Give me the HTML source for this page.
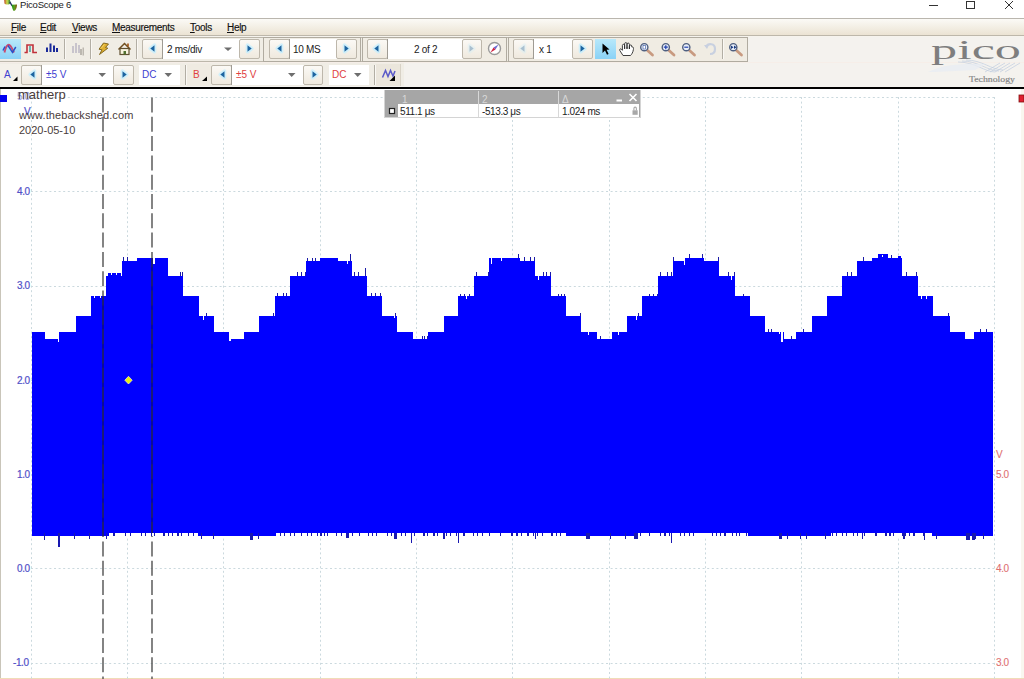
<!DOCTYPE html>
<html><head><meta charset="utf-8">
<style>
*{margin:0;padding:0;box-sizing:border-box}
html,body{width:1024px;height:679px;overflow:hidden;background:#fff;font-family:"Liberation Sans",sans-serif}
.a{position:absolute}
.t{position:absolute;white-space:nowrap;line-height:1}
#title{left:0;top:0;width:1024px;height:19px;background:#fff;border-bottom:1px solid #bab6ae}
#menu{left:0;top:19px;width:1024px;height:17px;background:linear-gradient(#fbfaf6,#ebe3d3);border-bottom:1px solid #bdb7aa}
#tb{left:0;top:36px;width:1024px;height:51px;background:#f4f2ee}
.m{font-size:10px;color:#111;-webkit-text-stroke:0.15px #111;top:23px;letter-spacing:-0.3px}
.m u{text-decoration:underline;text-underline-offset:1px}

.sep{position:absolute;width:2px;height:20px;background:linear-gradient(90deg,#b2aea4 50%,#faf8f4 50%)}
.btn{position:absolute;border:1px solid #bdb7ab;border-radius:2px;background:linear-gradient(#fbf9f5,#efe9de)}
.cmb{position:absolute;background:#fff;border-left:1px solid #9f9b93}
.frm{position:absolute;border:1px solid #b0aba0;background:#f0ece3}
.sel{background:linear-gradient(#b8e8fa,#8ad2f6)}
.tx{font-size:10px;color:#222;letter-spacing:-0.3px}
.tb{font-size:10px;color:#4040d0}
.tr{font-size:10px;color:#e04040}

.ax{font-size:10px;color:#5050c8;-webkit-text-stroke:0.2px #5050c8;letter-spacing:-0.4px}
.axr{font-size:10px;color:#e07070;-webkit-text-stroke:0.1px #e07070;letter-spacing:-0.4px}
.nt{font-size:11px;color:#4a3c3c}
.mh{font-size:10px;color:#d8d8d8}
.md{font-size:10px;color:#222;letter-spacing:-0.4px}
</style></head><body>
<div id="title" class="a"></div>
<div class="t" style="left:20px;top:0.3px;font-size:9.5px;color:#1a1a1a;letter-spacing:-0.2px">PicoScope 6</div>
<div id="menu" class="a"></div>
<div class="t m" style="left:11px"><u>F</u>ile</div>
<div class="t m" style="left:40px"><u>E</u>dit</div>
<div class="t m" style="left:72px"><u>V</u>iews</div>
<div class="t m" style="left:112px"><u>M</u>easurements</div>
<div class="t m" style="left:190px"><u>T</u>ools</div>
<div class="t m" style="left:227px"><u>H</u>elp</div>
<div id="tb" class="a"></div>

<!-- toolbar 1 -->
<div class="a" style="left:0;top:36px;width:1024px;height:1px;background:#f6f3ed"></div>
<div class="a" style="left:0;top:37px;width:748px;height:1px;background:#bcb7ab"></div>
<div class="a" style="left:0;top:61px;width:748px;height:1px;background:#bcb7ab"></div>
<div class="a" style="left:0;top:38px;width:748px;height:23px;background:#f0ede5"></div>
<div class="a sel" style="left:0;top:39px;width:21px;height:20px"></div>
<div class="sep" style="left:64px;top:39px"></div>
<div class="sep" style="left:90px;top:39px"></div>
<div class="sep" style="left:136px;top:39px"></div>
<!-- timebase -->
<div class="btn" style="left:142px;top:39px;width:21px;height:20px"></div>
<div class="cmb" style="left:162px;top:39px;width:78px;height:20px"></div>
<div class="btn" style="left:239px;top:39px;width:21px;height:20px"></div>
<!-- frames -->
<div class="frm" style="left:263px;top:37px;width:98px;height:25px"></div>
<div class="btn" style="left:269px;top:39px;width:21px;height:20px"></div>
<div class="cmb" style="left:289px;top:39px;width:48px;height:20px"></div>
<div class="btn" style="left:336px;top:39px;width:21px;height:20px"></div>
<div class="frm" style="left:362px;top:37px;width:145px;height:25px"></div>
<div class="btn" style="left:367px;top:39px;width:21px;height:20px"></div>
<div class="cmb" style="left:387px;top:39px;width:76px;height:20px"></div>
<div class="btn" style="left:462px;top:39px;width:20px;height:20px"></div>
<div class="frm" style="left:508px;top:37px;width:240px;height:25px"></div>
<div class="btn" style="left:513px;top:39px;width:21px;height:20px"></div>
<div class="cmb" style="left:533px;top:39px;width:40px;height:20px"></div>
<div class="btn" style="left:572px;top:39px;width:21px;height:20px"></div>
<div class="a sel" style="left:595px;top:39px;width:21px;height:20px"></div>
<div class="sep" style="left:722px;top:39px"></div>
<div class="t tx" style="left:167px;top:45px">2 ms/div</div>
<div class="t tx" style="left:293px;top:45px">10 MS</div>
<div class="t tx" style="left:414px;top:45px">2 of 2</div>
<div class="t tx" style="left:539px;top:45px">x 1</div>
<!-- toolbar 2 -->
<div class="a" style="left:0;top:62px;width:1024px;height:1px;background:#f6eee8"></div>
<div class="a" style="left:0;top:63px;width:404px;height:23px;background:#f0ede5"></div>
<div class="a" style="left:0;top:64px;width:21px;height:22px;background:#f4f1ea"></div>
<div class="btn" style="left:21px;top:65px;width:21px;height:20px"></div>
<div class="cmb" style="left:41px;top:65px;width:73px;height:20px"></div>
<div class="btn" style="left:113px;top:65px;width:21px;height:20px"></div>
<div class="cmb" style="left:139px;top:65px;width:41px;height:20px;border-left:none"></div>
<div class="sep" style="left:185px;top:65px"></div>
<div class="a" style="left:187px;top:64px;width:24px;height:22px;background:#efebe2"></div>
<div class="btn" style="left:211px;top:65px;width:21px;height:20px"></div>
<div class="cmb" style="left:231px;top:65px;width:73px;height:20px"></div>
<div class="btn" style="left:303px;top:65px;width:20px;height:20px"></div>
<div class="cmb" style="left:329px;top:65px;width:40px;height:20px;border-left:none"></div>
<div class="sep" style="left:374px;top:65px"></div>
<div class="a" style="left:376px;top:64px;width:25px;height:22px;background:#ebe6dc;border-right:1px solid #d8d2c6"></div>
<div class="t tb" style="left:4px;top:70px">A</div>
<div class="t tb" style="left:46px;top:70px">±5 V</div>
<div class="t tb" style="left:142px;top:70px">DC</div>
<div class="t tr" style="left:193px;top:70px">B</div>
<div class="t tr" style="left:236px;top:70px">±5 V</div>
<div class="t tr" style="left:332px;top:70px">DC</div>

<svg class="a" style="left:0;top:0" width="1024" height="89" viewBox="0 0 1024 89">
<defs>
<filter id="gl" x="-1" y="-1" width="3" height="3"><feGaussianBlur stdDeviation="1"/></filter>
</defs>
<!-- app icon -->
<defs>
<linearGradient id="ig1" x1="0" x2="1"><stop offset="0" stop-color="#c04020"/><stop offset="0.45" stop-color="#c8e050"/><stop offset="1" stop-color="#207030"/></linearGradient>
<linearGradient id="ig2" x1="0" x2="1"><stop offset="0" stop-color="#109010"/><stop offset="0.5" stop-color="#60a020"/><stop offset="1" stop-color="#805010"/></linearGradient>
</defs>
<path d="M4.2 0H10L10.6 3.2C9.5 5, 5.5 5, 4.5 3.5Z" fill="url(#ig1)"/>
<path d="M9.8 1.8L12.2 6" stroke="#283468" stroke-width="1.4"/>
<path d="M11.6 4.8L17 4.5C17 8, 15.5 11, 13.8 11C12.6 10, 12.1 7.5, 11.6 4.8Z" fill="url(#ig2)"/>
<!-- window controls -->
<path d="M929 5.5H938" stroke="#333" stroke-width="1"/>
<rect x="966.5" y="1.5" width="8" height="7" fill="none" stroke="#333" stroke-width="1"/>
<path d="M1005 1L1013 9M1013 1L1005 9" stroke="#333" stroke-width="1"/>
<!-- scope icon -->
<path d="M4.5 52.5 C6 46, 7.5 44.8, 8.8 44.8 C10.2 44.8, 12 48, 14 52.5" fill="none" stroke="#c84a70" stroke-width="1.9"/>
<path d="M3 50.5 L5 46.5 M8 45.5 L12.5 52.3 L15.8 47" fill="none" stroke="#2a50c8" stroke-width="1.5"/>
<!-- square wave -->
<path d="M24.5 52.5H27V45H33V52.5H37" fill="none" stroke="#c0303a" stroke-width="1.6"/>
<path d="M30 46V52" stroke="#40a0a0" stroke-width="1.5"/>
<!-- bars -->
<g fill="#1a2a9a"><rect x="46" y="47.5" width="2" height="4.5"/><rect x="49.5" y="43.5" width="2" height="8.5"/><rect x="53" y="45.5" width="2" height="6.5"/><rect x="56" y="48" width="2" height="4"/></g>
<!-- disabled bars -->
<g fill="#c8c4cc"><rect x="72" y="46" width="2" height="7"/><rect x="75" y="43" width="2" height="10"/><rect x="78" y="45" width="2" height="8"/></g>
<g fill="#bcb8b0"><rect x="80" y="49" width="2" height="6"/><rect x="82.5" y="47.5" width="1.5" height="8"/></g>
<!-- lightning -->
<path d="M103.5 43 L108.5 44 L105.5 47.5 L107.8 48.2 L99.5 54.5 L102 49.8 L99 49.2 Z" fill="#e0b030" stroke="#7a6018" stroke-width="0.9" stroke-linejoin="round"/>
<path d="M104.5 44.5 L101 48.5" stroke="#f8e080" stroke-width="0.8"/>
<!-- house -->
<path d="M118.5 49.5 L124.5 43.5 L130.5 49.5" fill="none" stroke="#705020" stroke-width="1.5"/>
<rect x="120" y="48.5" width="9" height="6" fill="#f8f4e0" stroke="#605030" stroke-width="1.2"/>
<rect x="123.5" y="51" width="2.5" height="3.5" fill="#507030"/>
<path d="M128 43.5V46.5" stroke="#a05010" stroke-width="1.6"/>
<!-- nav arrows (glow + triangle) -->
<g id="la">
<path d="M154.5 45.2 V51.8 L150.3 48.5 Z" fill="#c8f0ff" stroke="#c4eeff" stroke-width="3.6" stroke-linejoin="round" opacity="0.75"/>
<path d="M154.5 45.2 V51.8 L150.3 48.5 Z" fill="#1c64a0"/>
</g>
<use href="#la" x="127" y="0"/>
<use href="#la" x="224" y="0"/>
<use href="#la" x="370" y="0" opacity="0.35"/>
<use href="#la" x="-120" y="26"/>
<use href="#la" x="70" y="26"/>
<g id="ra">
<path d="M247.5 45.2 V51.8 L251.7 48.5 Z" fill="#c8f0ff" stroke="#c4eeff" stroke-width="3.6" stroke-linejoin="round" opacity="0.75"/>
<path d="M247.5 45.2 V51.8 L251.7 48.5 Z" fill="#1c64a0"/>
</g>
<use href="#ra" x="97" y="0"/>
<use href="#ra" x="222" y="0" opacity="0.35"/>
<use href="#ra" x="333" y="0"/>
<use href="#ra" x="-125" y="26"/>
<use href="#ra" x="65" y="26"/>
<!-- dropdown arrows -->
<g fill="#6e6e6e">
<path d="M224 47.5H232L228 51Z"/>
<path d="M98.5 73H106L102.2 77Z"/>
<path d="M164.5 73H172L168.2 77Z"/>
<path d="M288 73H295.5L291.7 77Z"/>
<path d="M354 73H361.5L357.7 77Z"/>
</g>
<!-- compass -->
<circle cx="494.5" cy="48.5" r="6" fill="#fff" stroke="#9a9a9a" stroke-width="1.4"/>
<path d="M498.5 44.5 L495.5 49.5 L493.5 47.5 Z" fill="#6a6ad0"/>
<path d="M490.5 52.5 L495.5 49.5 L493.5 47.5 Z" fill="#d02040"/>
<!-- pointer -->
<path d="M602.5 43.5 V53 L605 50.5 L607 54.8 L608.6 54 L606.6 49.8 L609.5 49.5 Z" fill="#000"/>
<!-- hand -->
<path d="M623 55.5 L619.8 50.5 C619.2 49.3 620.4 48.3 621.4 49.2 L622.4 50.3 V45.5 C622.4 43.9 624.6 43.9 624.6 45.5 V48.8 V43.8 C624.6 42.2 627 42.2 627 43.8 V48.8 V44.2 C627 42.7 629.4 42.7 629.4 44.2 V49 V46 C629.4 44.7 631.8 44.7 631.8 46 V47 C633.4 46.6 633.6 48 633.4 49.5 C633 52.5 631.5 54.5 630.5 55.5 Z" fill="#fff" stroke="#2a2a2a" stroke-width="0.9"/>
<path d="M624.6 47V49 M627 47V49 M629.4 47V49" stroke="#2a2a2a" stroke-width="0.5"/>
<!-- magnifiers -->
<g id="mg">
<path d="M647 50 L652.5 55" stroke="#c89a80" stroke-width="2.8" stroke-linecap="round"/>
<circle cx="644.3" cy="47.2" r="3.6" fill="#e8eef8" stroke="#506080" stroke-width="1.4"/>
</g>
<rect x="643" y="45.5" width="2.5" height="3.5" fill="#fff" stroke="#3050a0" stroke-width="0.6"/>
<use href="#mg" x="21.5" y="0"/>
<path d="M663.8 47.2H667.8M665.8 45.2V49.2" stroke="#2040b0" stroke-width="1.2"/>
<use href="#mg" x="42" y="0"/>
<path d="M684.3 47.2H688.3" stroke="#2040b0" stroke-width="1.2"/>
<path d="M706 47 C708 43, 715 43, 715 49 C715 53, 712 54, 710 54" fill="none" stroke="#c8d0e0" stroke-width="2.2"/>
<path d="M704 45 L707 49 L709 45 Z" fill="#c8d0e0"/>
<use href="#mg" x="89" y="0"/>
<path d="M731 45.5 L733.5 47.2 L731 49 Z M734 45.5 L736.5 47.2 L734 49 Z" fill="#1a3a80"/>
<!-- toolbar2 small -->
<path d="M13 81H17.5V76.5Z" fill="#000"/>
<path d="M202 81H207V76.5Z" fill="#000"/>
<path d="M382.5 77.5 L385.5 70.5 L388 76.5 L390.5 70.5 L393 76 L395 71" fill="none" stroke="#5a5ac8" stroke-width="1.5"/>
<path d="M389.5 81H395V75.5Z" fill="#000"/>
<!-- pico logo -->
<text x="931" y="59" font-family="Liberation Serif" font-size="27" fill="#7e7e7e" textLength="90" lengthAdjust="spacingAndGlyphs">pico</text>
<text x="969" y="82" font-family="Liberation Serif" font-size="8" fill="#858585" stroke="#858585" stroke-width="0.15" textLength="46" lengthAdjust="spacingAndGlyphs">Technology</text>
<g stroke="#c0cde0" stroke-width="0.7" fill="none">
<path d="M958 62 C975 62, 985 72, 995 72 M962 61 C978 61, 988 71, 999 71 M966 60 C982 60, 992 70, 1003 70"/>
<path d="M985 72 L1000 63 M990 72 L1005 63 M995 72 L1010 63 M1000 72 L1015 63 M1005 72 L1020 63"/>
</g>
<path d="M928 72 C940 66, 955 64, 970 64 L985 64 L975 70 L935 72 Z" fill="#e8ecf2" opacity="0.8"/>
</svg>
<div class="a" style="left:0;top:87px;width:1024px;height:2px;background:#000"></div>
<svg class="a" style="left:0;top:89px" width="1024" height="590" viewBox="0 89 1024 590">
<rect x="0" y="89" width="1024" height="590" fill="#fff"/>
<rect x="0" y="89" width="1" height="590" fill="#c9c5b9"/>
<rect x="0" y="678" width="1024" height="1" fill="#f0dcb8"/>
<g stroke="#cbd9de" stroke-width="1" stroke-dasharray="2 2.6">
<path d="M31.5 97V679M127.5 97V679M223.5 97V679M320.5 97V679M416.5 97V679M512.5 97V679M609.5 97V679M705.5 97V679M801.5 97V679M898.5 97V679M994.5 97V679"/>
<path d="M31 97.5H995M31 191.5H995M31 286.5H995M31 380.5H995M31 474.5H995M31 568.5H995M31 663.5H995"/>
</g>
<path fill="#0000ff" d="M32 332H45V339H59V332H76V316H91V296H106V276H122V261H137V258H168V276H183V296H199V316H214V332H229V339H244V332H259V316H275V296H290V276H306V261H320V258H338V261H352V276H367V296H382V316H397V332H413V339H428V332H444V316H458V296H474V276H489V258H520V261H535V276H551V296H566V316H581V332H597V339H612V332H627V316H642V296H658V276H673V261H685V258H704V261H719V276H735V296H750V316H765V332H784V339H796V332H812V316H827V296H842V276H857V261H872V258H902V276H918V296H933V316H950V332H965V339H974V332H993V536H32Z"/>

<!-- spikes -->
<g fill="#1a1aa8">
<rect x="123" y="257" width="1" height="4"/>
<rect x="127" y="257" width="1" height="4"/>
<rect x="180" y="272" width="1" height="4"/>
<rect x="182" y="272" width="1" height="4"/>
<rect x="206" y="313" width="1" height="3"/>
<rect x="273" y="313" width="1" height="3"/>
<rect x="277" y="293" width="1" height="3"/>
<rect x="283" y="293" width="1" height="3"/>
<rect x="286" y="293" width="1" height="3"/>
<rect x="297" y="272" width="1" height="4"/>
<rect x="301" y="272" width="1" height="4"/>
<rect x="305" y="272" width="1" height="4"/>
<rect x="307" y="258" width="1" height="3"/>
<rect x="312" y="258" width="1" height="3"/>
<rect x="315" y="258" width="1" height="3"/>
<rect x="350" y="254" width="1" height="7"/>
<rect x="354" y="272" width="1" height="4"/>
<rect x="358" y="272" width="1" height="4"/>
<rect x="365" y="268" width="1" height="8"/>
<rect x="371" y="293" width="1" height="3"/>
<rect x="375" y="293" width="1" height="3"/>
<rect x="380" y="293" width="1" height="3"/>
<rect x="395" y="313" width="1" height="3"/>
<rect x="422" y="336" width="1" height="3"/>
<rect x="424" y="336" width="1" height="3"/>
<rect x="427" y="336" width="1" height="3"/>
<rect x="460" y="294" width="1" height="2"/>
<rect x="464" y="294" width="1" height="2"/>
<rect x="469" y="294" width="1" height="2"/>
<rect x="476" y="272" width="1" height="4"/>
<rect x="488" y="272" width="1" height="4"/>
<rect x="518" y="254" width="1" height="4"/>
<rect x="524" y="257" width="1" height="4"/>
<rect x="530" y="257" width="1" height="4"/>
<rect x="534" y="257" width="1" height="4"/>
<rect x="543" y="272" width="1" height="4"/>
<rect x="546" y="272" width="1" height="4"/>
<rect x="550" y="272" width="1" height="4"/>
<rect x="558" y="294" width="1" height="2"/>
<rect x="561" y="294" width="1" height="2"/>
<rect x="564" y="294" width="1" height="2"/>
<rect x="580" y="313" width="1" height="3"/>
<rect x="600" y="336" width="1" height="3"/>
<rect x="638" y="313" width="1" height="3"/>
<rect x="649" y="294" width="1" height="2"/>
<rect x="653" y="294" width="1" height="2"/>
<rect x="657" y="294" width="1" height="2"/>
<rect x="660" y="272" width="1" height="4"/>
<rect x="667" y="272" width="1" height="4"/>
<rect x="671" y="272" width="1" height="4"/>
<rect x="673" y="257" width="1" height="4"/>
<rect x="689" y="254" width="1" height="4"/>
<rect x="702" y="254" width="1" height="4"/>
<rect x="718" y="257" width="1" height="4"/>
<rect x="728" y="272" width="1" height="4"/>
<rect x="734" y="272" width="1" height="4"/>
<rect x="743" y="294" width="1" height="2"/>
<rect x="768" y="329" width="1" height="3"/>
<rect x="771" y="329" width="1" height="3"/>
<rect x="791" y="336" width="1" height="3"/>
<rect x="803" y="329" width="1" height="3"/>
<rect x="847" y="272" width="1" height="4"/>
<rect x="851" y="272" width="1" height="4"/>
<rect x="863" y="257" width="1" height="4"/>
<rect x="891" y="255" width="1" height="3"/>
<rect x="906" y="272" width="1" height="4"/>
<rect x="916" y="272" width="1" height="4"/>
<rect x="948" y="313" width="1" height="3"/>
<rect x="980" y="329" width="1" height="3"/>
<rect x="986" y="329" width="1" height="3"/>




</g><g fill="#0000ff"><rect x="108" y="273" width="13" height="3"/><rect x="878" y="254" width="10" height="4"/><rect x="898" y="256" width="3" height="2"/></g><g fill="#fff">
<rect x="58" y="339" width="1" height="3"/>
<rect x="94" y="296" width="1" height="2"/>
<rect x="100" y="296" width="1" height="2"/>
<rect x="153" y="258" width="2" height="6"/>
<rect x="203" y="316" width="1" height="4"/>
<rect x="229" y="339" width="2" height="2"/>
<rect x="347" y="261" width="1" height="3"/>
<rect x="394" y="316" width="1" height="2"/>
<rect x="466" y="296" width="1" height="3"/>
<rect x="491" y="258" width="1" height="6"/>
<rect x="501" y="258" width="1" height="3"/>
<rect x="538" y="276" width="1" height="4"/>
<rect x="588" y="332" width="1" height="3"/>
<rect x="618" y="332" width="1" height="3"/>
<rect x="636" y="316" width="1" height="4"/>
<rect x="684" y="261" width="1" height="4"/>
<rect x="731" y="276" width="1" height="4"/>
<rect x="779" y="332" width="1" height="2"/>
<rect x="781" y="332" width="2" height="10"/>
<rect x="921" y="296" width="1" height="3"/>
<rect x="926" y="296" width="1" height="3"/>
<rect x="111" y="273" width="1" height="2"/>
<rect x="116" y="273" width="1" height="2"/>
<rect x="882" y="255" width="1" height="2"/>
</g>
<!-- cursors -->
<g stroke="#505050" stroke-width="1.4" stroke-dasharray="15 4.3">
<path d="M103 97.5V679M152 97.5V679"/>
</g>
<path d="M103 296V536M152 258V536" stroke="#101070" stroke-width="1.4"/>
<!-- bottom spikes -->
<g fill="#fff">
<rect x="703" y="533" width="7" height="3"/>
<rect x="109" y="533" width="89" height="3"/>
<rect x="276" y="533" width="70" height="3"/>
<rect x="349" y="533" width="45" height="3"/>
<rect x="397" y="533" width="46" height="3"/>
<rect x="445" y="533" width="121" height="3"/>
<rect x="638" y="533" width="65" height="3"/>
<rect x="710" y="533" width="38" height="3"/>
<rect x="831" y="533" width="101" height="3"/>
</g><g fill="#1818b0">
<rect x="113" y="533" width="2" height="3"/>
<rect x="125" y="533" width="1" height="3"/>
<rect x="130" y="533" width="1" height="3"/>
<rect x="141" y="533" width="1" height="3"/>
<rect x="145" y="533" width="1" height="3"/>
<rect x="151" y="533" width="1" height="3"/>
<rect x="154" y="533" width="1" height="3"/>
<rect x="163" y="533" width="2" height="3"/>
<rect x="168" y="533" width="1" height="3"/>
<rect x="172" y="533" width="1" height="3"/>
<rect x="177" y="533" width="2" height="3"/>
<rect x="181" y="533" width="1" height="3"/>
<rect x="188" y="533" width="1" height="3"/>
<rect x="193" y="533" width="1" height="3"/>
<rect x="280" y="533" width="1" height="3"/>
<rect x="284" y="533" width="1" height="3"/>
<rect x="290" y="533" width="1" height="3"/>
<rect x="294" y="533" width="1" height="3"/>
<rect x="301" y="533" width="1" height="3"/>
<rect x="307" y="533" width="1" height="3"/>
<rect x="311" y="533" width="1" height="3"/>
<rect x="317" y="533" width="1" height="3"/>
<rect x="320" y="533" width="2" height="3"/>
<rect x="324" y="533" width="1" height="3"/>
<rect x="327" y="533" width="1" height="3"/>
<rect x="336" y="533" width="1" height="3"/>
<rect x="341" y="533" width="1" height="3"/>
<rect x="352" y="533" width="1" height="3"/>
<rect x="359" y="533" width="1" height="3"/>
<rect x="368" y="533" width="1" height="3"/>
<rect x="372" y="533" width="1" height="3"/>
<rect x="376" y="533" width="1" height="3"/>
<rect x="387" y="533" width="1" height="3"/>
<rect x="391" y="533" width="1" height="3"/>
<rect x="401" y="533" width="1" height="3"/>
<rect x="405" y="533" width="1" height="3"/>
<rect x="414" y="533" width="1" height="3"/>
<rect x="423" y="533" width="2" height="3"/>
<rect x="427" y="533" width="1" height="3"/>
<rect x="433" y="533" width="2" height="3"/>
<rect x="437" y="533" width="1" height="3"/>
<rect x="446" y="533" width="1" height="3"/>
<rect x="450" y="533" width="1" height="3"/>
<rect x="456" y="533" width="1" height="3"/>
<rect x="463" y="533" width="2" height="3"/>
<rect x="473" y="533" width="1" height="3"/>
<rect x="477" y="533" width="1" height="3"/>
<rect x="482" y="533" width="1" height="3"/>
<rect x="489" y="533" width="1" height="3"/>
<rect x="500" y="533" width="1" height="3"/>
<rect x="511" y="533" width="2" height="3"/>
<rect x="516" y="533" width="2" height="3"/>
<rect x="521" y="533" width="1" height="3"/>
<rect x="527" y="533" width="2" height="3"/>
<rect x="533" y="533" width="1" height="3"/>
<rect x="537" y="533" width="1" height="3"/>
<rect x="542" y="533" width="1" height="3"/>
<rect x="551" y="533" width="2" height="3"/>
<rect x="556" y="533" width="1" height="3"/>
<rect x="560" y="533" width="1" height="3"/>
<rect x="640" y="533" width="1" height="3"/>
<rect x="649" y="533" width="1" height="3"/>
<rect x="660" y="533" width="1" height="3"/>
<rect x="664" y="533" width="2" height="3"/>
<rect x="669" y="533" width="1" height="3"/>
<rect x="680" y="533" width="1" height="3"/>
<rect x="684" y="533" width="1" height="3"/>
<rect x="689" y="533" width="1" height="3"/>
<rect x="693" y="533" width="1" height="3"/>
<rect x="712" y="533" width="1" height="3"/>
<rect x="716" y="533" width="1" height="3"/>
<rect x="720" y="533" width="1" height="3"/>
<rect x="724" y="533" width="2" height="3"/>
<rect x="732" y="533" width="1" height="3"/>
<rect x="736" y="533" width="1" height="3"/>
<rect x="739" y="533" width="1" height="3"/>
<rect x="746" y="533" width="1" height="3"/>
<rect x="832" y="533" width="1" height="3"/>
<rect x="836" y="533" width="1" height="3"/>
<rect x="842" y="533" width="1" height="3"/>
<rect x="846" y="533" width="1" height="3"/>
<rect x="853" y="533" width="1" height="3"/>
<rect x="857" y="533" width="1" height="3"/>
<rect x="864" y="533" width="1" height="3"/>
<rect x="875" y="533" width="2" height="3"/>
<rect x="885" y="533" width="2" height="3"/>
<rect x="889" y="533" width="2" height="3"/>
<rect x="893" y="533" width="1" height="3"/>
<rect x="902" y="533" width="1" height="3"/>
<rect x="905" y="533" width="1" height="3"/>
<rect x="909" y="533" width="1" height="3"/>
<rect x="913" y="533" width="2" height="3"/>
<rect x="923" y="533" width="1" height="3"/>
<rect x="58" y="533" width="2" height="14"/>
<rect x="346" y="533" width="3" height="5"/>
<rect x="394" y="533" width="3" height="6"/>
<rect x="443" y="533" width="2" height="6"/>
<rect x="586" y="533" width="4" height="6"/>
<rect x="634" y="533" width="4" height="6"/>
<rect x="779" y="533" width="3" height="6"/>
<rect x="966" y="533" width="4" height="7"/>
<rect x="972" y="533" width="3" height="7"/>
<rect x="250" y="533" width="3" height="7"/>
<rect x="903" y="533" width="2" height="6"/>
<rect x="411" y="533" width="1" height="10"/>
<rect x="458" y="533" width="1" height="10"/>
<rect x="535" y="533" width="1" height="6"/>
<rect x="671" y="533" width="1" height="10"/>
<rect x="924" y="533" width="1" height="7"/>
<rect x="44" y="533" width="1" height="7"/>
<rect x="74" y="533" width="1" height="6"/>
<rect x="89" y="533" width="1" height="6"/>
<rect x="106" y="533" width="1" height="6"/>
<rect x="201" y="533" width="1" height="6"/>
<rect x="213" y="533" width="1" height="6"/>
<rect x="258" y="533" width="1" height="6"/>
<rect x="610" y="533" width="1" height="6"/>
<rect x="625" y="533" width="1" height="6"/>
<rect x="787" y="533" width="1" height="6"/>
<rect x="800" y="533" width="1" height="6"/>
<rect x="806" y="533" width="1" height="6"/>
<rect x="825" y="533" width="1" height="6"/>
<rect x="862" y="533" width="1" height="6"/>
<rect x="936" y="533" width="1" height="6"/>
<rect x="983" y="533" width="1" height="6"/>
<rect x="975" y="533" width="1" height="6"/>
</g>
<!-- diamond -->
<path d="M128.5 376.3L132.2 380.2L128.5 384L124.8 380.2Z" fill="#e8f010" stroke="#f4f4c0" stroke-width="0.7"/>
<!-- channel markers -->
<rect x="1021" y="89" width="3" height="589" fill="#f6f4e8" opacity="0.7"/>
<rect x="0" y="95" width="7" height="7" fill="#0000f0"/>
<rect x="1019" y="95" width="5" height="7" fill="#e02030" stroke="#801010" stroke-width="0.8"/>
</svg>

<div class="t ax" style="left:17px;top:92px;color:#9a9ae0;-webkit-text-stroke:0">5.0</div>
<div class="t ax" style="left:24px;top:107px">V</div>
<div class="t ax" style="left:17px;top:187px">4.0</div>
<div class="t ax" style="left:17px;top:281px">3.0</div>
<div class="t ax" style="left:17px;top:376px">2.0</div>
<div class="t ax" style="left:17px;top:470px">1.0</div>
<div class="t ax" style="left:17px;top:564px">0.0</div>
<div class="t ax" style="left:13px;top:658px">-1.0</div>
<div class="t axr" style="left:996px;top:450px">V</div>
<div class="t axr" style="left:996px;top:470px">5.0</div>
<div class="t axr" style="left:996px;top:564px">4.0</div>
<div class="t axr" style="left:996px;top:658px">3.0</div>
<div class="t nt" style="left:18px;top:88px;font-size:13px">matherp</div>
<div class="t nt" style="left:19px;top:110px;letter-spacing:0.1px">www.thebackshed.com</div>
<div class="t nt" style="left:19px;top:125px">2020-05-10</div>
<!-- measurement table -->
<div class="a" style="left:384px;top:90px;width:257px;height:28px;background:#a6a6a6;border:1px solid #d4d4d4;border-top:none"></div>
<div class="a" style="left:398px;top:104px;width:80px;height:13px;background:#fff"></div>
<div class="a" style="left:479px;top:104px;width:79px;height:13px;background:#fff"></div>
<div class="a" style="left:559px;top:104px;width:80px;height:13px;background:#fff"></div>
<div class="a" style="left:478px;top:91px;width:1px;height:26px;background:#d8d8d8"></div>
<div class="a" style="left:558px;top:91px;width:1px;height:26px;background:#d8d8d8"></div>
<div class="t mh" style="left:402px;top:95px">1</div>
<div class="t mh" style="left:482px;top:95px">2</div>
<div class="t mh" style="left:562px;top:95px">Δ</div>
<div class="t md" style="left:400px;top:107px">511.1 μs</div>
<div class="t md" style="left:482px;top:107px">-513.3 μs</div>
<div class="t md" style="left:562px;top:107px">1.024 ms</div>
<svg class="a" style="left:384px;top:90px" width="257" height="28" viewBox="384 90 257 28">
<rect x="389.5" y="108.5" width="5" height="5" fill="#fff" stroke="#222" stroke-width="1.2"/>
<path d="M616.5 100.5H622" stroke="#fff" stroke-width="2"/>
<path d="M629.5 94L636.5 101M636.5 94L629.5 101" stroke="#fff" stroke-width="1.6"/>
<rect x="632.5" y="110.3" width="5.2" height="4.5" fill="#a8a8a8"/>
<path d="M633.9 110.5V108.8C633.9 106.6 636.4 106.6 636.4 108.8V110.5" fill="none" stroke="#a8a8a8" stroke-width="1.1"/>
</svg>
</body></html>
